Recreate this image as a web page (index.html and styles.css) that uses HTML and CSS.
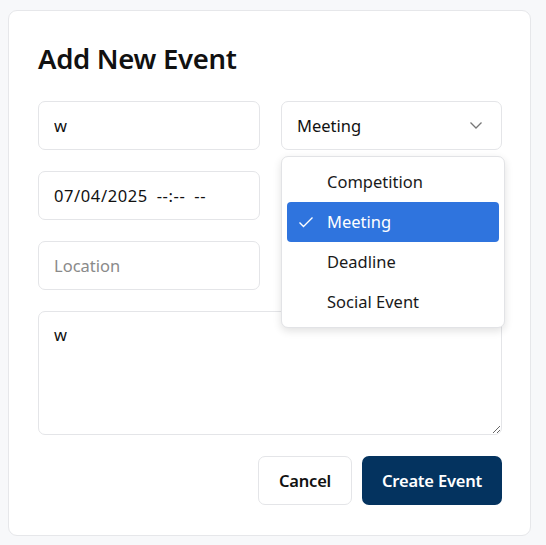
FILE: index.html
```html
<!DOCTYPE html>
<html>
<head>
<meta charset="utf-8">
<link rel="stylesheet" href="styles.css">
</head>
<body>
<div class="card">
  <h1 class="title">Add New Event</h1>
  <div class="grid">
    <input class="field" type="text" value="w">
    <div class="select-wrap">
      <div class="field select">
        <span>Meeting</span>
        <svg class="chev" width="14" height="9" viewBox="0 0 14 9"><path d="M1.5 1.5 L7 7 L12.5 1.5" fill="none" stroke="#777" stroke-width="1.3"/></svg>
      </div>
      <div class="menu">
        <div class="opt">Competition</div>
        <div class="opt sel"><svg class="check" width="16" height="12" viewBox="0 0 16 12"><path d="M1.5 6.5 L5.5 10.5 L14.5 1.5" fill="none" stroke="#fff" stroke-width="1.4"/></svg>Meeting</div>
        <div class="opt">Deadline</div>
        <div class="opt">Social Event</div>
      </div>
    </div>
    <input class="field date" type="text" value="07/04/2025 --:-- --">
    <div></div>
    <input class="field" type="text" placeholder="Location">
    <div></div>
    <textarea class="field area">w</textarea>
  </div>
  <div class="actions">
    <button class="btn cancel">Cancel</button>
    <button class="btn primary">Create Event</button>
  </div>
</div>
</body>
</html>
```
FILE: styles.css
```css
html, body {
  margin: 0;
  padding: 0;
  background: #f7f8fa;
  font-family: "Noto Sans", "Open Sans", sans-serif;
}
body {
  padding: 10px 14px 9px 8px;
}
.card {
  width: 464px;
  background: #fff;
  border: 1px solid #e6e7ea;
  border-radius: 9px;
  padding: 30px 28px 30px 29px;
}
.title {
  margin: 0 0 24px 0;
  font-size: 27.5px;
  font-weight: 600;
  color: #111;
  line-height: 36px;
  letter-spacing: -0.3px;
}
.grid {
  display: grid;
  grid-template-columns: 222px 221px;
  column-gap: 21px;
  row-gap: 21px;
}
.field {
  box-sizing: border-box;
  height: 49px;
  width: 100%;
  border: 1px solid #e4e5e8;
  border-radius: 7px;
  padding: 0 15px;
  font-family: inherit;
  font-size: 16.5px;
  color: #111;
  background: #fff;
  outline: none;
  margin: 0;
}
.field::placeholder { color: #8a8a8a; }
.date {
  letter-spacing: 0.6px;
  word-spacing: 4px;
}
.area {
  grid-column: 1 / 3;
  height: 124px;
  padding: 11px 15px;
  resize: vertical;
  display: block;
}
.select-wrap { position: relative; }
.select {
  display: flex;
  align-items: center;
  justify-content: space-between;
  padding-right: 18px;
}
.menu {
  position: absolute;
  left: 0;
  top: 55px;
  width: 224px;
  box-sizing: border-box;
  background: #fff;
  border: 1px solid #e2e3e6;
  border-radius: 7px;
  box-shadow: 0 3px 8px rgba(0,0,0,0.12);
  padding: 5px 5px;
  z-index: 5;
}
.opt {
  position: relative;
  height: 40px;
  line-height: 40px;
  padding-left: 40px;
  font-size: 16.5px;
  color: #1a1a1a;
  border-radius: 4px;
}
.opt.sel {
  background: #2f74de;
  color: #fff;
}
.check {
  position: absolute;
  left: 11px;
  top: 14px;
}
.actions {
  display: flex;
  justify-content: flex-end;
  gap: 10px;
  margin-top: 21px;
}
.btn {
  height: 49px;
  border-radius: 7px;
  font-family: inherit;
  font-size: 16.5px;
  font-weight: 600;
  padding: 0;
  white-space: nowrap;
  letter-spacing: -0.2px;
}
.cancel {
  background: #fff;
  border: 1px solid #e4e5e8;
  color: #111;
  width: 94px;
}
.primary {
  background: #04335f;
  border: none;
  color: #fff;
  width: 140px;
}
```
